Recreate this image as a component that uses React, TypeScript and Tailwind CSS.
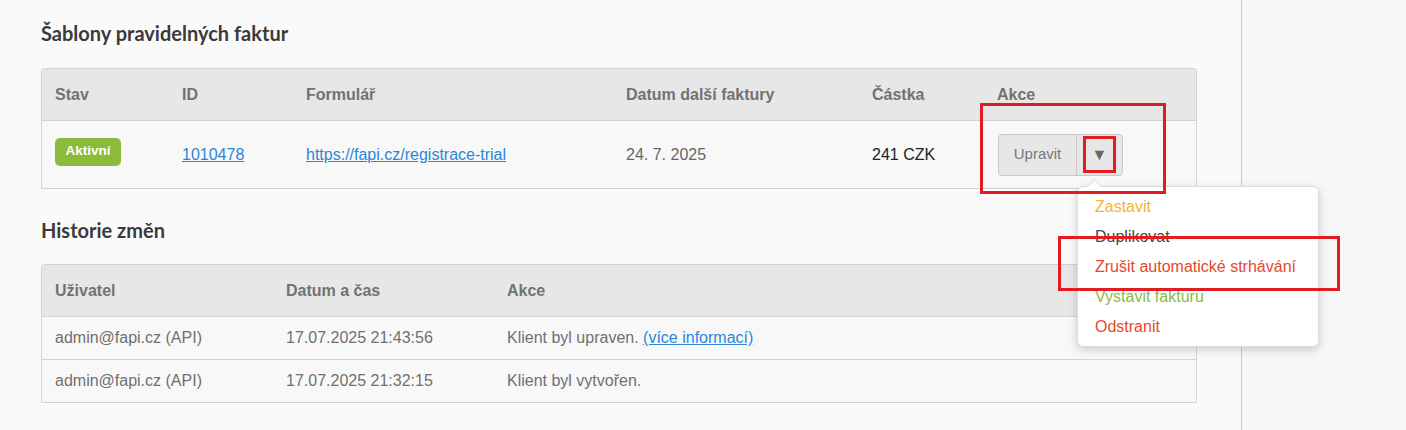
import React from "react";

const sans = "font-['Liberation_Sans',Arial,sans-serif]";

const menu = [
  { label: "Zastavit", color: "text-[#f4b336]" },
  { label: "Duplikovat", color: "text-[#454545]" },
  { label: "Zrušit automatické strhávání", color: "text-[#e4492b]" },
  { label: "Vystavit fakturu", color: "text-[#8cbb3c]" },
  { label: "Odstranit", color: "text-[#e4492b]" },
];

const history = [
  { user: "admin@fapi.cz (API)", date: "17.07.2025 21:43:56", text: "Klient byl upraven.", more: true },
  { user: "admin@fapi.cz (API)", date: "17.07.2025 21:32:15", text: "Klient byl vytvořen.", more: false },
];

const App: React.FC = () => {
  return (
    <div className={`flex h-[430px] w-[1406px] overflow-hidden ${sans} text-[16px]`}>
      <div className="relative w-[1242px] shrink-0 border-r border-[#cacaca] bg-[#fafafa] pl-[41px] pt-[21px]">
        <h2 className="h-6 font-['Lato',sans-serif] text-[20px] font-bold leading-6 text-[#3a3a3a]">
          Šablony pravidelných faktur
        </h2>

        <div className="mt-[23px] w-[1156px] rounded-t-[3px] border border-[#d3d3d3]">
          <div className="grid h-[52px] grid-cols-[127px_124px_320px_246px_125px_1fr] items-center rounded-t-[3px] border-b border-[#d3d3d3] bg-[#e7e7e7] pl-[13px] font-bold text-[#727272]">
            <div>Stav</div>
            <div>ID</div>
            <div>Formulář</div>
            <div>Datum další faktury</div>
            <div>Částka</div>
            <div>Akce</div>
          </div>
          <div className="grid h-[67px] grid-cols-[127px_124px_320px_246px_125px_1fr] items-center pl-[13px] bg-[#f8f8f8]">
            <div>
              <span className="-mt-[6px] flex h-[28px] w-[66px] items-center justify-center rounded-[5px] bg-[#8cbb3c] text-[13.5px] font-bold text-white">
                Aktivní
              </span>
            </div>
            <div>
              <a className="text-[#2b86d9] underline">1010478</a>
            </div>
            <div>
              <a className="text-[#2b86d9] underline">https://fapi.cz/registrace-trial</a>
            </div>
            <div className="text-[#666]">24. 7. 2025</div>
            <div className="text-[#222]">241 CZK</div>
            <div>
              <div className="ml-px flex h-[42px] w-[125px] rounded-[4px] border border-[#c9c9c9] bg-[#e7e7e7]">
                <div className="flex w-[78px] items-center justify-center border-r border-[#c9c9c9] text-[15px] text-[#777]">
                  Upravit
                </div>
                <div className="flex flex-1 items-center justify-center text-[16px] text-[#666]">▼</div>
              </div>
            </div>
          </div>
        </div>

        <h2 className="mt-[29px] h-6 font-['Lato',sans-serif] text-[20px] font-bold leading-6 text-[#3a3a3a]">
          Historie změn
        </h2>

        <div className="mt-[22px] w-[1156px] rounded-tl-[3px] border border-[#d3d3d3]">
          <div className="grid h-[52px] grid-cols-[231px_221px_1fr] items-center rounded-tl-[3px] border-b border-[#d3d3d3] bg-[#e7e7e7] pl-[13px] font-bold text-[#727272]">
            <div>Uživatel</div>
            <div>Datum a čas</div>
            <div>Akce</div>
          </div>
          {history.map((h, i) => (
            <div
              key={h.date}
              className={`grid grid-cols-[231px_221px_1fr] items-center bg-[#f8f8f8] pl-[13px] text-[#707070] ${
                i === 0 ? "h-[43px] border-b border-[#d3d3d3]" : "h-[42px]"
              }`}
            >
              <div>{h.user}</div>
              <div>{h.date}</div>
              <div>
                {h.text}{" "}
                {h.more && <a className="text-[#2b86d9] underline">(více informací)</a>}
              </div>
            </div>
          ))}
        </div>

        {/* dropdown menu */}
        <div className="absolute left-[1077px] top-[186px] h-[161px] w-[242px] rounded-[6px] border border-[#dddddd] bg-white pt-[5px] shadow-[0_3px_10px_rgba(0,0,0,0.18)]">
          <div className="absolute -top-[6px] left-[11px] h-[11px] w-[11px] rotate-45 border-l border-t border-[#dddddd] bg-white" />
          {menu.map((m) => (
            <div key={m.label} className={`relative h-[30px] pl-[17px] leading-[30px] ${m.color}`}>
              {m.label}
            </div>
          ))}
        </div>

        {/* annotations */}
        <div className="absolute left-[980px] top-[103px] h-[91px] w-[186px] border-[3px] border-[#e31b23]" />
        <div className="absolute left-[1083px] top-[136px] h-[37px] w-[33px] border-[3px] border-[#e31b23]" />
        <div className="absolute left-[1058px] top-[236px] h-[55px] w-[282px] border-[3px] border-[#e31b23]" />
      </div>
      <div className="flex-1 bg-[#f7f7f7]" />
    </div>
  );
};

export default App;
